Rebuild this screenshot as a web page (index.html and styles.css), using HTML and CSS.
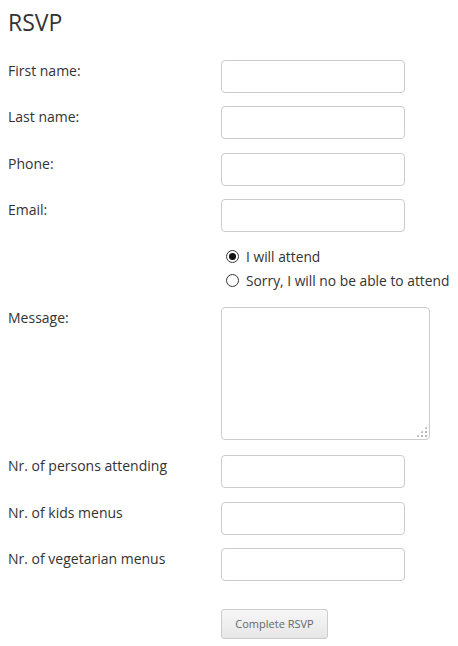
FILE: index.html
```html
<!DOCTYPE html>
<html lang="en">
<head>
  <meta charset="UTF-8">
  <title>RSVP</title>
  <link rel="stylesheet" href="styles.css">
</head>
<body>

  <h1>RSVP</h1>

  <form class="rsvp">
    <div class="row">
      <label for="first">First name:</label>
      <input type="text" id="first">
    </div>
    <div class="row">
      <label for="last">Last name:</label>
      <input type="text" id="last">
    </div>
    <div class="row">
      <label for="phone">Phone:</label>
      <input type="text" id="phone">
    </div>
    <div class="row">
      <label for="email">Email:</label>
      <input type="text" id="email">
    </div>

    <div class="choices">
      <label class="choice"><input type="radio" name="attend" checked> I will attend</label>
      <label class="choice"><input type="radio" name="attend"> Sorry, I will no be able to attend</label>
    </div>

    <div class="row">
      <label for="message">Message:</label>
      <div class="area-wrap">
        <textarea id="message"></textarea>
        <span class="grip"></span>
      </div>
    </div>

    <div class="row after-area">
      <label for="persons">Nr. of persons attending</label>
      <input type="text" id="persons">
    </div>
    <div class="row">
      <label for="kids">Nr. of kids menus</label>
      <input type="text" id="kids">
    </div>
    <div class="row">
      <label for="veg">Nr. of vegetarian menus</label>
      <input type="text" id="veg">
    </div>

    <div class="submit">
      <button type="button">Complete RSVP</button>
    </div>
  </form>

</body>
</html>
```

FILE: styles.css
```css
body {
  font-family: "Open Sans", "Liberation Sans", sans-serif;
  color: #333;
  margin: 8px;
  background: #fff;
}
h1 {
  font-size: 23px;
  font-weight: normal;
  line-height: 28px;
  margin: 0;
  color: #333;
}
.rsvp {
  margin-top: 24px;
  display: flex;
  flex-direction: column;
  gap: 13.4px;
}
.row {
  display: grid;
  grid-template-columns: 213px 1fr;
  align-items: start;
}
.row label {
  font-size: 14px;
  line-height: 20px;
  padding-top: 1px;
}
input[type="text"] {
  box-sizing: border-box;
  width: 184px;
  height: 33px;
  margin: 0;
  border: 1px solid #ccc;
  border-radius: 4px;
  padding: 4px 8px;
  font: inherit;
}
.choices {
  display: flex;
  flex-direction: column;
  align-items: flex-start;
  margin: -1px 0 1px 0;
  padding-left: 218px;
}
.choice {
  display: flex;
  align-items: center;
  height: 24px;
  font-size: 13.8px;
  white-space: nowrap;
}
.choice input {
  appearance: none;
  box-sizing: border-box;
  flex: none;
  width: 13px;
  height: 13px;
  margin: 0 7px 0 0;
  border: 1px solid #333;
  border-radius: 50%;
  background: #fff;
  display: grid;
  place-content: center;
}
.choice input:checked::before {
  content: "";
  width: 7px;
  height: 7px;
  border-radius: 50%;
  background: #111;
}
.area-wrap {
  position: relative;
  width: 209px;
  height: 133px;
}
textarea {
  box-sizing: border-box;
  width: 209px;
  height: 133px;
  margin: 0;
  border: 1px solid #ccc;
  border-radius: 4px;
  resize: none;
  font: inherit;
  display: block;
}
.grip {
  position: absolute;
  right: 3px;
  bottom: 3px;
  width: 11px;
  height: 11px;
  background:
    radial-gradient(circle, #bbb 1px, transparent 1.2px) 0 0 / 4px 4px;
  clip-path: polygon(100% 0, 100% 100%, 0 100%);
}
.after-area {
  margin-top: 2px;
}
.submit {
  margin-top: 14px;
  padding-left: 213px;
}
button {
  font-family: inherit;
  font-size: 11px;
  color: #666;
  width: 107px;
  height: 30px;
  border: 1px solid #ccc;
  border-radius: 3px;
  background: linear-gradient(#f7f7f7, #e6e6e6);
  cursor: pointer;
  padding: 0;
}
```
